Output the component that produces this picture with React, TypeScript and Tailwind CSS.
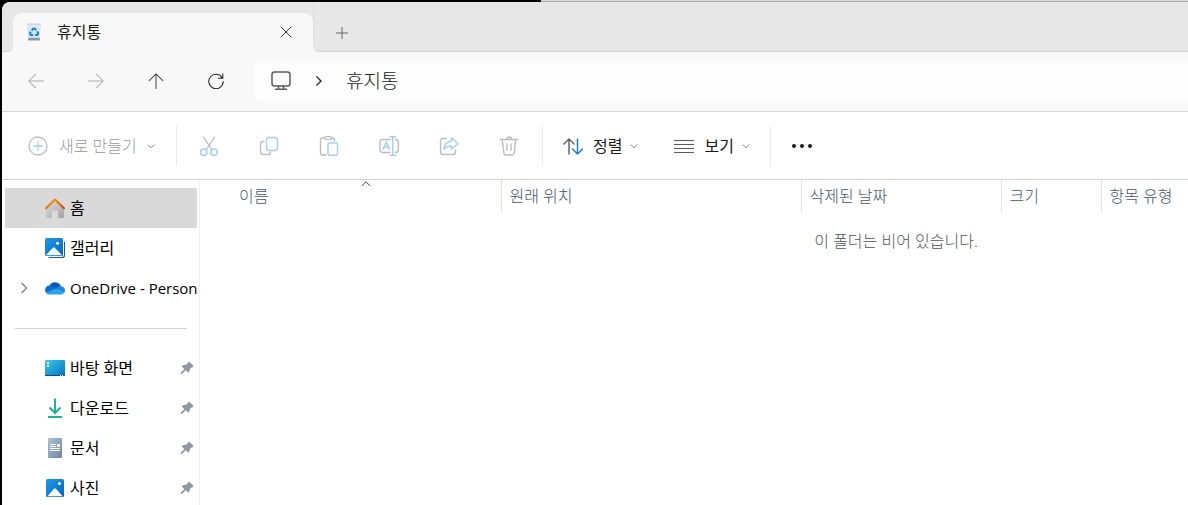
import { useState } from 'react';
import type { ReactNode } from 'react';

type IconProps = { children: ReactNode; className?: string };

function Icon({ children, className = 'size-5' }: IconProps) {
  return (
    <svg
      viewBox="0 0 20 20"
      className={`shrink-0 ${className}`}
      fill="none"
      stroke="currentColor"
      strokeLinecap="round"
      strokeLinejoin="round"
      aria-hidden="true"
    >
      {children}
    </svg>
  );
}

const GRAY = '#bdbdbd';
const BLUE = '#a3cff3';

function ChevronDown() {
  return (
    <svg viewBox="0 0 8 8" className="size-2 shrink-0" fill="none" stroke="#888" aria-hidden="true">
      <path d="M.7 2.5 4 5.8l3.3-3.3" />
    </svg>
  );
}

function RecycleBinIcon() {
  return (
    <svg viewBox="0 0 16 20" className="h-5 w-4 shrink-0" aria-hidden="true">
      <defs>
        <linearGradient id="bin" x1="0" y1="0" x2="0" y2="1">
          <stop offset="0" stopColor="#e3e9ee" />
          <stop offset="1" stopColor="#d3dde7" />
        </linearGradient>
      </defs>
      <path d="M1 2h14l-1.2 14H2.2z" fill="url(#bin)" />
      <path d="M1 1.5h14v1.3H1z" fill="#c9d0d6" />
      <path d="M2 16h12l-.3 2.5H2.300z" fill="#8697a6" />
      <g fill="none" stroke="#1583d8" strokeWidth="2">
        <path d="m5.8 8.6 1.2-1.9h2.1l.9 1.4" />
        <path d="m11.2 9.4 1 1.9-1 1.8H9.2" />
        <path d="M7.2 13.1H4.9l-1-1.8.9-1.6" />
      </g>
    </svg>
  );
}

function HomeIcon() {
  return (
    <svg viewBox="0 0 20 20" className="size-5 shrink-0" aria-hidden="true">
      <defs>
        <linearGradient id="wall" x1="0" y1="0" x2="1" y2="1">
          <stop offset="0" stopColor="#dedede" />
          <stop offset="1" stopColor="#a2a2a2" />
        </linearGradient>
        <linearGradient id="roof" x1="0" y1="0" x2="1" y2="1">
          <stop offset="0" stopColor="#f9a01b" />
          <stop offset="1" stopColor="#cf4a10" />
        </linearGradient>
      </defs>
      <path d="M10 2.5 1 11v8a1 1 0 0 0 1 1h5v-6.5a1 1 0 0 1 1-1h4a1 1 0 0 1 1 1V20h5a1 1 0 0 0 1-1v-8z" fill="url(#wall)" />
      <path d="M1 10.2 10 1.5l9 8.7" fill="none" stroke="url(#roof)" strokeWidth="2.2" strokeLinecap="round" strokeLinejoin="round" />
    </svg>
  );
}

function GalleryIcon() {
  return (
    <svg viewBox="0 0 20 20" className="size-5 shrink-0" aria-hidden="true">
      <defs>
        <linearGradient id="gallery" x1="0" y1="0" x2="1" y2="1">
          <stop offset="0" stopColor="#1e9be6" />
          <stop offset="1" stopColor="#0a63b8" />
        </linearGradient>
      </defs>
      <path d="M19 3.2c.7.2 1 .7 1 1.3V18a2 2 0 0 1-2 2H4.5c-.6 0-1.1-.4-1.3-1H17a2 2 0 0 0 2-2z" fill="#0b5fae" />
      <rect width="18" height="18" rx="1.5" fill="url(#gallery)" />
      <path d="m1 17 6.9-7.2a1.3 1.3 0 0 1 1.8 0L17 17a1.5 1.5 0 0 1-.8.3H1.8z" fill="#f0f8ff" />
      <circle cx="12.5" cy="5.3" r="1.5" fill="#fff" />
    </svg>
  );
}

function OneDriveIcon() {
  return (
    <svg viewBox="0 0 20 14" className="h-3.5 w-5 shrink-0" aria-hidden="true">
      <path d="M4.6 4.4A6.3 6.3 0 0 1 16 5.3L12 9z" fill="#0a5cb0" />
      <path d="M4.7 4.3a4.7 4.7 0 0 0-3.6 7.6L12 8 8.2 5.2a4.7 4.7 0 0 0-3.5-.9z" fill="#0d70cc" />
      <path d="M15.5 5.2c2.5 0 4.5 1.9 4.5 4.2 0 1-.3 1.9-.9 2.6L10.6 7.6c1.3-1.5 3-2.4 4.9-2.4z" fill="#1989dc" />
      <path d="M1.1 11.9c.8 1 2 1.5 3.4 1.5H16c1.3 0 2.4-.5 3.1-1.4l-8.500-4.500z" fill="#28a0ea" />
    </svg>
  );
}

function DesktopIcon() {
  return (
    <svg viewBox="0 0 20 20" className="size-5 shrink-0" aria-hidden="true">
      <defs>
        <linearGradient id="desktop" x1="0" y1="0" x2="1" y2="1">
          <stop offset="0" stopColor="#34cfe0" />
          <stop offset="1" stopColor="#0c6cc4" />
        </linearGradient>
      </defs>
      <rect y="2" width="20" height="16" rx="1" fill="url(#desktop)" />
      <path d="M0 17h20a1 1 0 0 1-1 1H1a1 1 0 0 1-1-1z" fill="#0a4d80" />
      <path d="M2 4h2v2H2zM2 7h2v2H2zM15 17h1v1h-1zM17 17h1v1h-1z" fill="#fff" />
    </svg>
  );
}

function DownloadIcon() {
  return (
    <svg viewBox="0 0 20 20" className="size-5 shrink-0" fill="none" stroke="#1fb28e" strokeWidth="2" aria-hidden="true">
      <path d="M10 .5v14" />
      <path d="m4.5 9.5 5.5 5.5 5.500-5.500" />
      <path d="M3 19h14" />
    </svg>
  );
}

function DocumentIcon() {
  return (
    <svg viewBox="0 0 20 20" className="size-5 shrink-0" aria-hidden="true">
      <defs>
        <linearGradient id="doc" x1="0" y1="0" x2="1" y2="1">
          <stop offset="0" stopColor="#b0c2d4" />
          <stop offset="1" stopColor="#6a84a4" />
        </linearGradient>
      </defs>
      <rect x="3" width="14" height="20" rx="1" fill="url(#doc)" />
      <path d="M5 6h6v1H5zM5 8h6v1H5zM12 6h3v3h-3zM5 10h10v1H5zM5 12h10v1H5z" fill="#fff" />
    </svg>
  );
}

function PictureIcon() {
  return (
    <svg viewBox="0 0 20 20" className="size-5 shrink-0" aria-hidden="true">
      <rect x="1" y="1" width="18" height="18" rx="1.5" fill="url(#gallery)" />
      <path d="m2.3 18.3 6.700-7.500a1.300 1.300 0 0 1 1.900 0l6.800 7.500z" fill="#f6fbff" />
      <circle cx="14.5" cy="5.5" r="1.5" fill="#fff" />
    </svg>
  );
}

function PinIcon() {
  return (
    <svg viewBox="0 0 14 14" className="size-3.5 shrink-0" fill="#8f999f" aria-hidden="true">
      <path d="M8.3 1.2a1 1 0 0 1 1.5 0l3.200 3.100a1 1 0 0 1-.2 1.600L10.200 7.400l-1 3.600a.8.8 0 0 1-1.300.3L5.700 9.300 2 13H.7v-1.200l3.700-3.700-2.200-2.200a.8.8 0 0 1 .3-1.300l3.800-1z" />
    </svg>
  );
}

function NavButton({ label, disabled, children }: { label: string; disabled?: boolean; children: ReactNode }) {
  return (
    <button
      aria-label={label}
      disabled={disabled}
      className="flex h-10 w-15 items-center justify-center text-[#4a4a4a] disabled:text-[#adadad]"
    >
      <Icon className="size-4">{children}</Icon>
    </button>
  );
}

function ToolButton({ label, children }: { label: string; children: ReactNode }) {
  return (
    <button aria-label={label} disabled className="flex h-10 w-15 items-center justify-center">
      <Icon>{children}</Icon>
    </button>
  );
}

function Separator() {
  return <div className="h-10 w-px shrink-0 bg-[#ebebeb]" />;
}

function TabBar() {
  return (
    <div className="flex h-[50px] shrink-0 rounded-tl-lg">
      <div className="w-[11px] rounded-tl-lg rounded-br-md border-b border-[#d6d6d6] bg-[#e7e7e7]" />
      <div className="flex h-11 w-[300px] items-end bg-[#e7e7e7]">
        <div className="mt-[11px] -mb-1.5 flex h-[39px] w-full items-center rounded-t-[9px] bg-[#f8f8f8] pr-[15px] pb-0.5 pl-[13px]">
          <RecycleBinIcon />
          <span className="ml-[15px] flex-1 font-normal">휴지통</span>
          <button aria-label="탭 닫기" className="flex size-6 items-center justify-center">
            <svg viewBox="0 0 12 12" className="size-3" fill="none" stroke="#333" aria-hidden="true">
              <path d="m.8.8 10.400 10.400M11.200.8.8 11.200" />
            </svg>
          </button>
        </div>
      </div>
      <div className="flex flex-1 items-center rounded-bl-md border-b border-l border-[#d6d6d6] border-l-[#e0e0e0] bg-[#e7e7e7] pt-3 pl-4">
        <button aria-label="새 탭 추가" className="flex size-6 items-center justify-center">
          <svg viewBox="0 0 12 12" className="size-3" fill="none" stroke="#666" aria-hidden="true">
            <path d="M6 0v12M0 6h12" />
          </svg>
        </button>
      </div>
    </div>
  );
}

function AddressBar() {
  return (
    <div className="flex h-[60px] shrink-0 items-center border-b border-[#d6d6d6] bg-[#f8f8f8] pb-px pl-1">
      <NavButton label="뒤로" disabled>
        <path strokeWidth="1.3" d="M19.5 10H1M9.5 1.5 1 10l8.500 8.500" />
      </NavButton>
      <NavButton label="앞으로" disabled>
        <path strokeWidth="1.3" d="M.5 10H19M10.5 1.5 19 10l-8.500 8.500" />
      </NavButton>
      <NavButton label="위로">
        <path strokeWidth="1.3" d="M10 19.5V1M1.5 9.5 10 1l8.500 8.500" />
      </NavButton>
      <NavButton label="새로 고침">
        <path stroke="#222" strokeWidth="1.3" d="M18 6.500A9 9 0 1 0 19 10.500M18.500 1v5.500H13" />
      </NavButton>
      <div className="ml-2 flex h-10 flex-1 items-center rounded-l-md bg-[#fdfdfd] pl-[17px]">
        <Icon>
          <g stroke="#5c5c5c" strokeWidth="1.5">
            <rect x="1" y="1" width="18" height="14" rx="2.5" />
            <path d="M7.5 15v3M12.5 15v3M4.5 18.300h11" />
          </g>
        </Icon>
        <svg viewBox="0 0 8 12" className="ml-6 h-3 w-2" fill="none" stroke="#222" strokeWidth="1.3" aria-hidden="true">
          <path d="m1.500 1.500 4.500 4.500-4.500 4.500" />
        </svg>
        <span className="ml-[23px] text-[19px] text-[#222]">휴지통</span>
      </div>
    </div>
  );
}

function Toolbar() {
  return (
    <div className="flex h-[68px] shrink-0 items-center border-b border-[#d2d2d2] bg-white">
      <button disabled className="flex h-10 w-[174px] shrink-0 items-center pl-[26px] text-[#999]">
        <Icon>
          <circle cx="10" cy="10" r="9" stroke={GRAY} strokeWidth="1.3" />
          <path d="M10 5.8v8.400M5.8 10h8.400" stroke={BLUE} strokeWidth="1.3" />
        </Icon>
        <span className="mr-2.5 ml-[11px]">새로 만들기</span>
        <ChevronDown />
      </button>
      <Separator />
      <div className="mr-[3px] ml-0.5 flex">
        <ToolButton label="잘라내기">
          <path d="M4.5 1 13 14M15.5 1 7 14" stroke={GRAY} strokeWidth="1.3" />
          <g stroke={BLUE} strokeWidth="1.5">
            <circle cx="4.700" cy="16.200" r="3.200" />
            <circle cx="15" cy="16.200" r="3.200" />
          </g>
        </ToolButton>
        <ToolButton label="복사">
          <path d="M5 5.5H4a2.500 2.500 0 0 0-2.500 2.500v7.500A3 3 0 0 0 4.500 18.500H9a2.500 2.500 0 0 0 2.500-2.500" stroke={GRAY} strokeWidth="1.4" />
          <rect x="7.5" y="1.5" width="11" height="13" rx="2.5" stroke={BLUE} strokeWidth="1.4" />
        </ToolButton>
        <ToolButton label="붙여넣기">
          <path d="M7 19H3a1.500 1.500 0 0 1-1.500-1.500v-14A1.500 1.500 0 0 1 3 2h2.500M12.500 2H14a1.500 1.500 0 0 1 1.500 1.500V5" stroke={GRAY} strokeWidth="1.4" />
          <rect x="5.5" y=".7" width="7" height="2.6" rx="1.3" stroke={GRAY} strokeWidth="1.3" />
          <rect x="9" y="7" width="9.5" height="12.3" rx="1.5" stroke={BLUE} strokeWidth="1.4" />
        </ToolButton>
        <ToolButton label="이름 바꾸기">
          <path d="M11 3.5H3.5A2.500 2.500 0 0 0 1 6v8a2.500 2.500 0 0 0 2.500 2.500H11M16.500 3.500A2.500 2.500 0 0 1 19.300 6v8a2.500 2.500 0 0 1-2.800 2.500" stroke={GRAY} strokeWidth="1.4" />
          <path d="M4 13.5 7.300 5.800l3.300 7.700M5.200 11h4.300M13.700 1v18M11 .7h5.500M11 19.300h5.500" stroke={BLUE} strokeWidth="1.4" />
        </ToolButton>
        <ToolButton label="공유">
          <path d="M7.5 2.5H4A2.500 2.500 0 0 0 1.500 5v11A2.500 2.500 0 0 0 4 18.500h10a2.500 2.500 0 0 0 2.500-2.500v-2" stroke={GRAY} strokeWidth="1.4" />
          <path d="m12.500 2 6.500 5.500-6.500 5.500v-3C9.300 9.800 7 10.800 5 13.500 5.300 8.600 8 5.500 12.500 5.200z" stroke={BLUE} strokeWidth="1.4" />
        </ToolButton>
        <ToolButton label="삭제">
          <path d="M1.5 3.5h17M3.200 3.500 5 17.500A1.800 1.800 0 0 0 6.800 19h6.400a1.800 1.800 0 0 0 1.800-1.500l1.800-14M7.500 3.500a2.500 2.500 0 0 1 5 0M8 8v6M12 8v6" stroke={GRAY} strokeWidth="1.4" />
        </ToolButton>
      </div>
      <Separator />
      <button className="flex h-10 shrink-0 items-center pl-5">
        <Icon>
          <path d="M6 18V3M1 8l5-5 5 5" stroke="#5a5a5a" strokeWidth="1.4" />
          <path d="M14.500 3v15M9.500 13l5 5 5-5" stroke="#1a7fd6" strokeWidth="1.5" />
        </Icon>
        <span className="mr-2 ml-2.5 font-normal">정렬</span>
        <ChevronDown />
      </button>
      <button className="ml-9 flex h-10 shrink-0 items-center">
        <Icon>
          <path d="M0 4.500h20M0 8.500h20M0 12.500h20M0 16.500h20" stroke="#5a5a5a" strokeLinecap="butt" />
        </Icon>
        <span className="mr-2 ml-2.5 font-normal">보기</span>
        <ChevronDown />
      </button>
      <div className="ml-5 flex items-center">
        <Separator />
        <button aria-label="자세히 보기" className="flex h-10 w-[62px] items-center justify-center">
          <svg viewBox="0 0 20 4" className="h-1 w-5" fill="#1a1a1a" aria-hidden="true">
            <circle cx="2" cy="2" r="2" />
            <circle cx="10" cy="2" r="2" />
            <circle cx="18" cy="2" r="2" />
          </svg>
        </button>
      </div>
    </div>
  );
}

type Place = { name: string; icon: ReactNode; expandable?: boolean; pinned?: boolean };

const places: Place[] = [
  { name: '홈', icon: <HomeIcon /> },
  { name: '갤러리', icon: <GalleryIcon /> },
  { name: 'OneDrive - Personal', icon: <OneDriveIcon />, expandable: true },
];

const pinnedPlaces: Place[] = [
  { name: '바탕 화면', icon: <DesktopIcon />, pinned: true },
  { name: '다운로드', icon: <DownloadIcon />, pinned: true },
  { name: '문서', icon: <DocumentIcon />, pinned: true },
  { name: '사진', icon: <PictureIcon />, pinned: true },
];

function Sidebar() {
  const [selected, setSelected] = useState('홈');

  const renderPlace = (place: Place) => (
    <li key={place.name}>
      <button
        onClick={() => setSelected(place.name)}
        className={`flex h-10 w-full items-center overflow-hidden rounded-xs pr-[3px] text-left font-normal text-black ${
          selected === place.name ? 'bg-[#d9d9d9]' : ''
        }`}
      >
        <span className="flex w-10 shrink-0 pl-[15px]">
          {place.expandable && (
            <svg viewBox="0 0 8 12" className="h-3 w-2" fill="none" stroke="#868686" strokeWidth="1.5" aria-hidden="true">
              <path d="m1.500 1 5 5-5 5" />
            </svg>
          )}
        </span>
        {place.icon}
        <span className={`ml-[5px] flex-1 whitespace-nowrap ${place.expandable ? 'text-[15px]' : ''}`}>{place.name}</span>
        {place.pinned && <PinIcon />}
      </button>
    </li>
  );

  return (
    <nav className="w-[198px] shrink-0 overflow-hidden border-r border-[#f0f0f0] pt-2 pr-0.5 pl-[3px]">
      <ul>{places.map(renderPlace)}</ul>
      <div className="flex h-10 items-center px-2.5">
        <hr className="w-full border-[#d2d2d2]" />
      </div>
      <ul>{pinnedPlaces.map(renderPlace)}</ul>
    </nav>
  );
}

function FileList() {
  return (
    <div className="min-w-0 flex-1 overflow-hidden">
      <table className="w-full min-w-[1392px] table-fixed border-collapse">
        <colgroup>
          <col className="w-[301px]" />
          <col className="w-[300px]" />
          <col className="w-[200px]" />
          <col className="w-[100px]" />
          <col />
        </colgroup>
        <thead>
          <tr className="h-8 text-left text-[#3f5570]">
            <th className="relative border-r border-[#e2e2e2] pl-[39px] font-light">
              <svg viewBox="0 0 10 6" className="absolute top-px left-[161px] h-1.5 w-2.5" fill="none" stroke="#444" aria-hidden="true">
                <path d="M.8 5 5 .8 9.200 5" />
              </svg>
              이름
            </th>
            <th className="border-r border-[#e2e2e2] pl-2 font-light">원래 위치</th>
            <th className="border-r border-[#e2e2e2] pl-2 font-light">삭제된 날짜</th>
            <th className="border-r border-[#e2e2e2] pl-2 font-light">크기</th>
            <th className="pl-2 font-light">항목 유형</th>
          </tr>
        </thead>
        <tbody>
          <tr>
            <td colSpan={5} className="pt-[17px] text-center text-[#555]">
              이 폴더는 비어 있습니다.
            </td>
          </tr>
        </tbody>
      </table>
    </div>
  );
}

export default function App() {
  return (
    <div className="flex h-screen flex-col overflow-hidden bg-black font-['Open_Sans','Noto_Sans_CJK_KR',sans-serif] text-base font-light text-[#1a1a1a]">
      <div className="flex h-0.5 shrink-0">
        <div className="w-[541px] bg-black" />
        <div className="flex-1 border-b border-[#ababab] bg-[#dcdcdc]" />
      </div>
      <div className="ml-0.5 flex min-h-0 flex-1 flex-col overflow-hidden rounded-tl-lg bg-[#f8f8f8]">
        <TabBar />
        <AddressBar />
        <Toolbar />
        <main className="flex min-h-0 flex-1 bg-white">
          <Sidebar />
          <FileList />
        </main>
      </div>
    </div>
  );
}
